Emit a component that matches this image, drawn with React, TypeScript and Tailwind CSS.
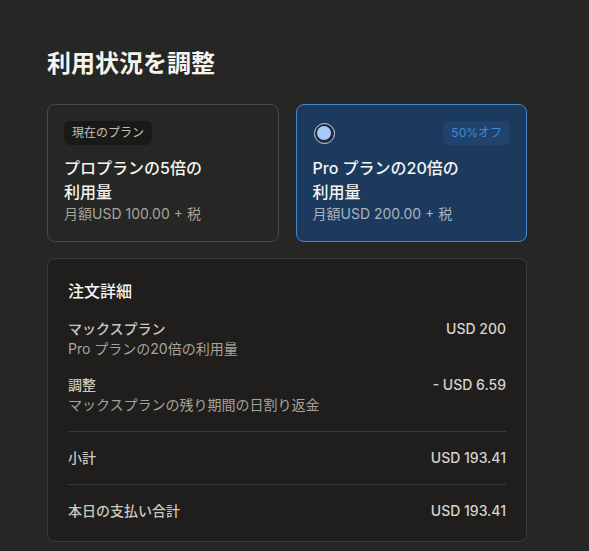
import React from "react";

const font = { fontFamily: 'Inter, "Noto Sans CJK JP", sans-serif' };

export default function App() {
  return (
    <div className="min-h-[551px] bg-[#262624] pl-[47px] pt-12 pb-2" style={font}>
      <div className="w-[480px]">
        <h1 className="text-[24px] leading-8 font-semibold text-[#f5f4ef]">利用状況を調整</h1>

        <div className="mt-6 grid grid-cols-2 gap-[17px]">
          <div className="h-[138px] rounded-lg border border-[#4a4945] bg-[#262624] px-4 pt-4">
            <div className="flex h-6 items-center">
              <span className="inline-flex h-6 items-center rounded-md bg-[#191918] px-2 text-[12px] text-[#c2c0b6]">現在のプラン</span>
            </div>
            <div className="mt-[11px] text-[16px] leading-6 font-medium text-[#f5f4ef]">
              プロプランの5倍の
              <br />
              利用量
            </div>
            <div className="text-[14px] leading-5 text-[#a6a39b]">月額USD 100.00 + 税</div>
          </div>

          <div className="h-[138px] rounded-lg border border-[#4686cc] bg-[#1c3a5e] px-4 pt-4">
            <div className="flex h-6 items-center justify-between">
              <div className="ml-[1px] flex h-[21px] w-[21px] items-center justify-center rounded-full border-[1.5px] border-[#d2d6dc] bg-[#1b2a3c]">
                <div className="h-[14px] w-[14px] rounded-full bg-[#a6cbfa]" />
              </div>
              <span className="inline-flex h-6 items-center rounded-md bg-[#21436b] px-2 text-[12px] text-[#3d8ad8]">50%オフ</span>
            </div>
            <div className="mt-[11px] text-[16px] leading-6 font-medium text-[#f5f4ef]">
              Pro プランの20倍の
              <br />
              利用量
            </div>
            <div className="text-[14px] leading-5 text-[#a9b3bf]">月額USD 200.00 + 税</div>
          </div>
        </div>

        <div className="mt-4 rounded-lg border border-[#3b3a37] bg-[#1f1e1d] px-5 pt-5 pb-5">
          <div className="text-[16px] leading-6 font-medium text-[#f5f4ef]">注文詳細</div>

          <div className="mt-4 flex justify-between">
            <div>
              <div className="text-[14px] leading-5 font-medium text-[#c9c7be]">マックスプラン</div>
              <div className="text-[14px] leading-5 text-[#a6a39b]">Pro プランの20倍の利用量</div>
            </div>
            <div className="text-[14px] leading-5 font-medium text-[#d6d4cc]">USD 200</div>
          </div>

          <div className="mt-4 flex justify-between">
            <div>
              <div className="text-[14px] leading-5 font-medium text-[#c9c7be]">調整</div>
              <div className="text-[14px] leading-5 text-[#a6a39b]">マックスプランの残り期間の日割り返金</div>
            </div>
            <div className="text-[14px] leading-5 font-medium text-[#d6d4cc]">- USD 6.59</div>
          </div>

          <div className="mt-4 flex justify-between border-t border-[#3b3a37] py-4">
            <div className="text-[14px] leading-5 font-medium text-[#c9c7be]">小計</div>
            <div className="text-[14px] leading-5 font-medium text-[#d6d4cc]">USD 193.41</div>
          </div>

          <div className="flex justify-between border-t border-[#3b3a37] pt-4">
            <div className="text-[14px] leading-5 font-medium text-[#c9c7be]">本日の支払い合計</div>
            <div className="text-[14px] leading-5 font-medium text-[#d6d4cc]">USD 193.41</div>
          </div>
        </div>
      </div>
    </div>
  );
}
